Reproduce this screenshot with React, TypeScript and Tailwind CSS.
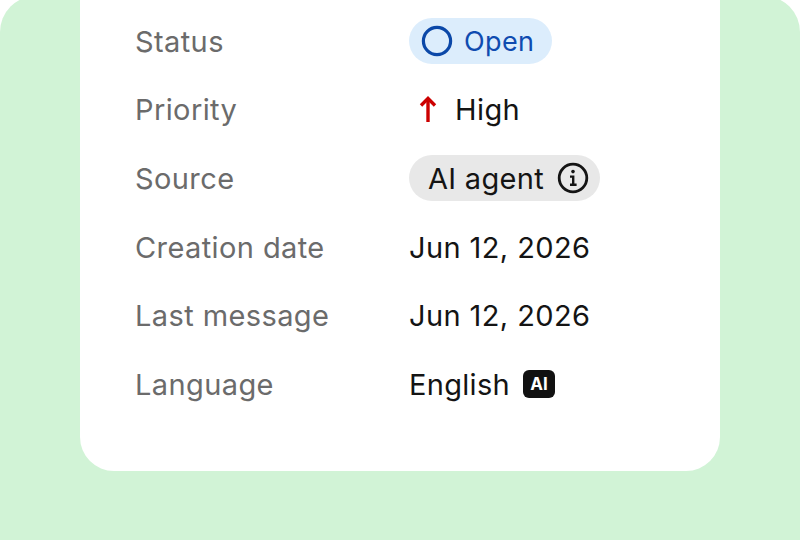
const rows = [
  { label: "Status", value: <span className="flex h-[46px] items-center gap-[11px] rounded-full bg-[#dcedfc] pl-[12px] pr-[18px] text-[27px] text-[#0f4bb0]">
      <svg width="32" height="32" viewBox="0 0 32 32" fill="none"><circle cx="16" cy="16" r="13.6" stroke="#0b48a8" strokeWidth="3.2" /></svg>
      <span>Open</span></span> },
  { label: "Priority", value: <span className="flex items-center gap-[11px] pl-[3px]">
      <svg width="32" height="32" viewBox="0 0 32 32" fill="none" stroke="#cc0000" strokeWidth="3.4"><path d="M16 28V5" /><path d="M9 11.5 16 4.5l7 7" /></svg>
      <span>High</span></span> },
  { label: "Source", value: <span className="flex h-[46px] items-center gap-[13px] rounded-full bg-[#e8e8e8] pl-[19px] pr-[11px]">
      <span className="tracking-[0.3px]">AI agent</span>
      <svg width="32" height="32" viewBox="0 0 32 32" fill="none" stroke="#141414"><circle cx="16" cy="16" r="13.8" strokeWidth="2.8" /><circle cx="16" cy="9.6" r="1.8" fill="#141414" stroke="none" /><path d="M13 14.6H16.2V22.6M13 22.7H19.6" strokeWidth="2.4" /></svg></span> },
  { label: "Creation date", value: <span>Jun 12, 2026</span> },
  { label: "Last message", value: <span>Jun 12, 2026</span> },
  { label: "Language", value: <span className="flex items-center gap-[13px]"><span className="tracking-[0.3px]">English</span>
      <span className="flex h-[28px] w-[32px] items-center justify-center rounded-[6px] bg-[#111111] text-[17px] font-bold leading-none tracking-normal text-white">AI</span></span> },
];

export default function App() {
  return (
    <div className="h-[540px] w-[800px] overflow-hidden bg-white font-['Inter',sans-serif]">
      <div className="h-[544px] -mt-[4px] rounded-t-[36px] bg-[#d1f3d6]">
        <div className="mx-20 rounded-b-[34px] bg-white pl-[55px] pr-[40px] pt-[11px] h-[475px]">
          {rows.map((r) => (
            <div key={r.label} className="flex h-[68.6px] items-center text-[29px] leading-none tracking-[0.4px] text-[#141414]">
              <div className="w-[274px] text-[#6b6b6b]">{r.label}</div>
              {r.value}
            </div>
          ))}
        </div>
      </div>
    </div>
  );
}
